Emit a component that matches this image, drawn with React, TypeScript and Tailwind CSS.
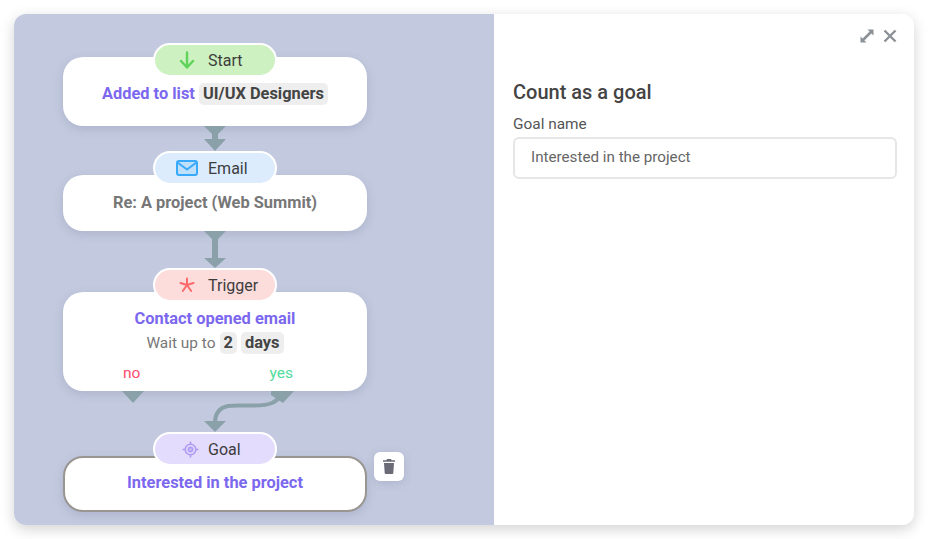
import React from 'react';

const ARROW = '#8ba1aa';

const StartIcon = () => (
  <svg width="18" height="18" viewBox="0 0 18 18" fill="none" stroke="#5fd35a" strokeWidth="2.4" strokeLinecap="round" strokeLinejoin="round">
    <path d="M9 1.5V16M3 10l6 6.5L15 10" />
  </svg>
);

const MailIcon = () => (
  <svg width="22" height="16" viewBox="0 0 22 16" fill="none" stroke="#38a9fb" strokeWidth="2" strokeLinejoin="round">
    <rect x="1" y="1" width="20" height="14" rx="2" fill="#bfe0fb" />
    <path d="M1.5 2.5 11 9.5l9.5-7" />
  </svg>
);

const AsteriskIcon = () => (
  <svg width="16" height="16" viewBox="0 0 16 16" fill="none" stroke="#fb6a6a" strokeWidth="2" strokeLinecap="round">
    <path d="M8 1.5V8M1.5 6l6.5 2M14.5 6 8 8M3.8 14 8 8M12.2 14 8 8" />
  </svg>
);

const TargetIcon = () => (
  <svg width="17" height="17" viewBox="0 0 18 18" fill="none" stroke="#ae9bf5" strokeWidth="1.7" className="ml-[8px]">
    <circle cx="9" cy="9" r="5.6" />
    <circle cx="9" cy="9" r="2.2" fill="#ae9bf5" fillOpacity="0.4" />
    <path d="M9 0.5v3M9 14.5v3M0.5 9h3M14.5 9h3" />
  </svg>
);

const ExpandIcon = () => (
  <svg width="14" height="14" viewBox="0 0 14 14" fill="#8b9196" stroke="none">
    <path d="M7.500 0.500H13.500V6.500L11.400 4.400 4.400 11.400 6.500 13.500H0.500V7.500L2.600 9.600 9.600 2.600z" />
  </svg>
);

const CloseIcon = () => (
  <svg width="14" height="14" viewBox="0 0 14 14" fill="none" stroke="#8b9196" strokeWidth="2.4">
    <path d="M1.500 1.500l11 11M12.500 1.500l-11 11" />
  </svg>
);

const TrashIcon = () => (
  <svg width="12" height="15" viewBox="0 0 12 15" fill="#6b6b78">
    <path d="M4 0h4l.6 1.200H12v1.600H0V1.200h3.400zM1 4h10l-.7 10a1 1 0 0 1-1 1H2.700a1 1 0 0 1-1-1z" />
  </svg>
);

const Pill: React.FC<{ icon: React.ReactNode; label: string; bg: string; overlap: string }> = ({ icon, label, bg, overlap }) => (
  <div className={`relative z-10 flex h-[34px] w-[124px] items-center rounded-[17px] border-2 border-white ${overlap} ${bg}`}>
    <span className="flex w-[50px] shrink-0 justify-center pl-[13px]">{icon}</span>
    <span className="ml-[3px] pt-[2px] text-[16px] font-normal text-[#3d3d3d]">{label}</span>
  </div>
);

const Chip: React.FC<{ children: React.ReactNode }> = ({ children }) => (
  <span className="inline-block rounded-[5px] bg-[#eeeeee] px-[4px] text-[16.4px] font-bold leading-[22px] text-[#444]">{children}</span>
);

const Node: React.FC<{
  icon: React.ReactNode;
  label: string;
  bg: string;
  overlap?: string;
  cardClass: string;
  children: React.ReactNode;
}> = ({ icon, label, bg, overlap = '-mb-[10px]', cardClass, children }) => (
  <div className="flex w-[304px] flex-col items-center">
    <Pill icon={icon} label={label} bg={bg} overlap={overlap} />
    <div className={`w-full rounded-[20px] bg-white text-center text-[16.4px] shadow-[0_3px_10px_rgba(80,90,130,0.2)] ${cardClass}`}>{children}</div>
  </div>
);

const DoubleArrow = () => (
  <svg width="304" height="25" viewBox="0 0 304 25" className="block">
    <path d="M141 0h22l-11 11zM141 13h22l-11 12z" fill={ARROW} />
    <path d="M149 0h6v14h-6z" fill={ARROW} />
  </svg>
);

const LongArrow = () => (
  <svg width="304" height="37" viewBox="0 0 304 37" className="block">
    <path d="M141 0h22l-8 8v19h8l-11 10-11-10h8V8z" fill={ARROW} />
  </svg>
);

const BranchArrows = () => (
  <svg width="304" height="41" viewBox="0 0 304 41" className="block">
    <path d="M59 0h22L70 12zM208 0h23l-11 12-12-8z" fill={ARROW} />
    <path d="M152 32c0-8 3-15 13-17 12-2 32 2 44-3 4-2 7-4 9-8" fill="none" stroke={ARROW} strokeWidth="4" />
    <path d="M141 30h22l-11 11z" fill={ARROW} />
  </svg>
);

const FlowPanel = () => (
  <div className="flex w-[480px] shrink-0 flex-col bg-[#c3cadf] pl-[49px] pt-[29px]">
    <Node icon={<StartIcon />} label="Start" bg="bg-[#cdf1c0]" overlap="-mb-[20px]" cardClass="h-[69px] pt-[25px]">
      <span className="font-bold text-[#7b68ee]">Added to list</span>{' '}
      <Chip>UI/UX Designers</Chip>
    </Node>
    <DoubleArrow />
    <Node icon={<MailIcon />} label="Email" bg="bg-[#dcecfd]" cardClass="h-[56px] pt-[16px]">
      <span className="font-bold text-[#777]">Re: A project (Web Summit)</span>
    </Node>
    <LongArrow />
    <Node icon={<AsteriskIcon />} label="Trigger" bg="bg-[#fddcdc]" cardClass="h-[99px] pt-[16px]">
      <div className="font-bold leading-[22px] text-[#7b68ee]">Contact opened email</div>
      <div className="mt-[1px] leading-[24px] text-[#777]">
        <span className="text-[15.4px]">Wait up to</span> <Chip>2</Chip> <Chip>days</Chip>
      </div>
      <div className="mt-[8px] flex justify-between pl-[60px] pr-[74px] text-[15.5px] leading-[20px]">
        <span className="text-[#fb4d6d]">no</span>
        <span className="text-[#4fdc9d]">yes</span>
      </div>
    </Node>
    <BranchArrows />
    <div className="relative w-[304px]">
      <Node icon={<TargetIcon />} label="Goal" bg="bg-[#e3dcfd]" cardClass="h-[56px] border-2 border-[#999591] pt-[13px]">
        <span className="font-bold text-[#7b68ee]">Interested in the project</span>
      </Node>
      <button className="absolute left-[311px] top-[20px] flex h-[29px] w-[30px] items-center justify-center rounded-[6px] bg-white shadow-[0_2px_8px_rgba(80,90,130,0.2)]">
        <TrashIcon />
      </button>
    </div>
  </div>
);

const GoalPanel = () => (
  <div className="flex-1 bg-white pl-[19px] pr-[17px] pt-[15px]">
    <div className="flex h-[14px] justify-end gap-[9px]">
      <ExpandIcon />
      <CloseIcon />
    </div>
    <h2 className="mt-[36px] text-[20px] font-medium leading-[26px] text-[#444]">Count as a goal</h2>
    <label className="mt-[7px] block text-[15.4px] leading-[24px] text-[#555]">Goal name</label>
    <input
      readOnly
      value="Interested in the project"
      className="mt-[1px] h-[42px] w-full rounded-[6px] border-2 border-[#e6e6e6] px-[16px] pb-[2px] text-[15.2px] text-[#666] outline-none"
    />
  </div>
);

export default function App() {
  return (
    <div className="h-[539px] w-[928px] bg-white pl-[14px] pt-[14px] font-['Roboto',sans-serif]">
      <div className="flex h-[511px] w-[900px] overflow-hidden rounded-[12px] shadow-[0_4px_14px_rgba(0,0,0,0.18)]">
        <FlowPanel />
        <GoalPanel />
      </div>
    </div>
  );
}
